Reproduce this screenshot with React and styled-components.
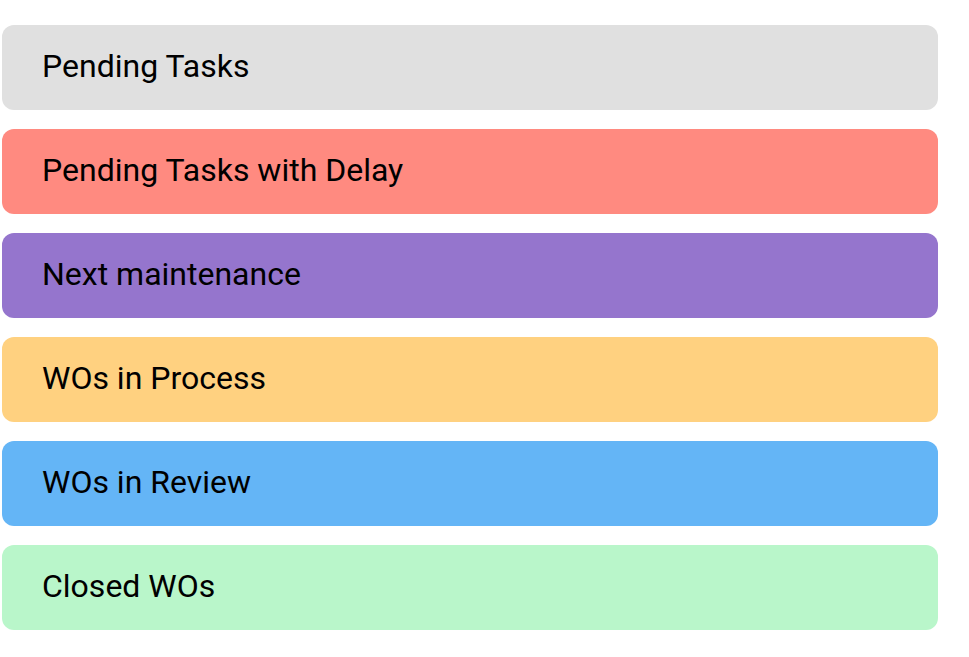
import styled, { createGlobalStyle } from 'styled-components'

const GlobalStyle = createGlobalStyle`
  html, body {
    margin: 0;
    background: #ffffff;
  }
  body {
    font-family: Roboto, "Liberation Sans", sans-serif;
  }
`

const List = styled.div`
  display: flex;
  flex-direction: column;
  gap: 19px;
  width: 936px;
  padding: 25px 0 0 2px;
`

const Card = styled.div`
  display: flex;
  align-items: center;
  height: 85px;
  padding: 0 40px 3px;
  border-radius: 12px;
  background: ${(p) => p.$bg};
  color: #000;
  font-size: 32px;
  box-sizing: border-box;
`

const cards = [
  { label: 'Pending Tasks', bg: '#e0e0e0' },
  { label: 'Pending Tasks with Delay', bg: '#ff8a80' },
  { label: 'Next maintenance', bg: '#9575cd' },
  { label: 'WOs in Process', bg: '#ffd180' },
  { label: 'WOs in Review', bg: '#64b5f6' },
  { label: 'Closed WOs', bg: '#b9f6ca' },
]

export default function App() {
  return (
    <>
      <GlobalStyle />
      <List>
        {cards.map((c) => (
          <Card key={c.label} $bg={c.bg}>
            {c.label}
          </Card>
        ))}
      </List>
    </>
  )
}
